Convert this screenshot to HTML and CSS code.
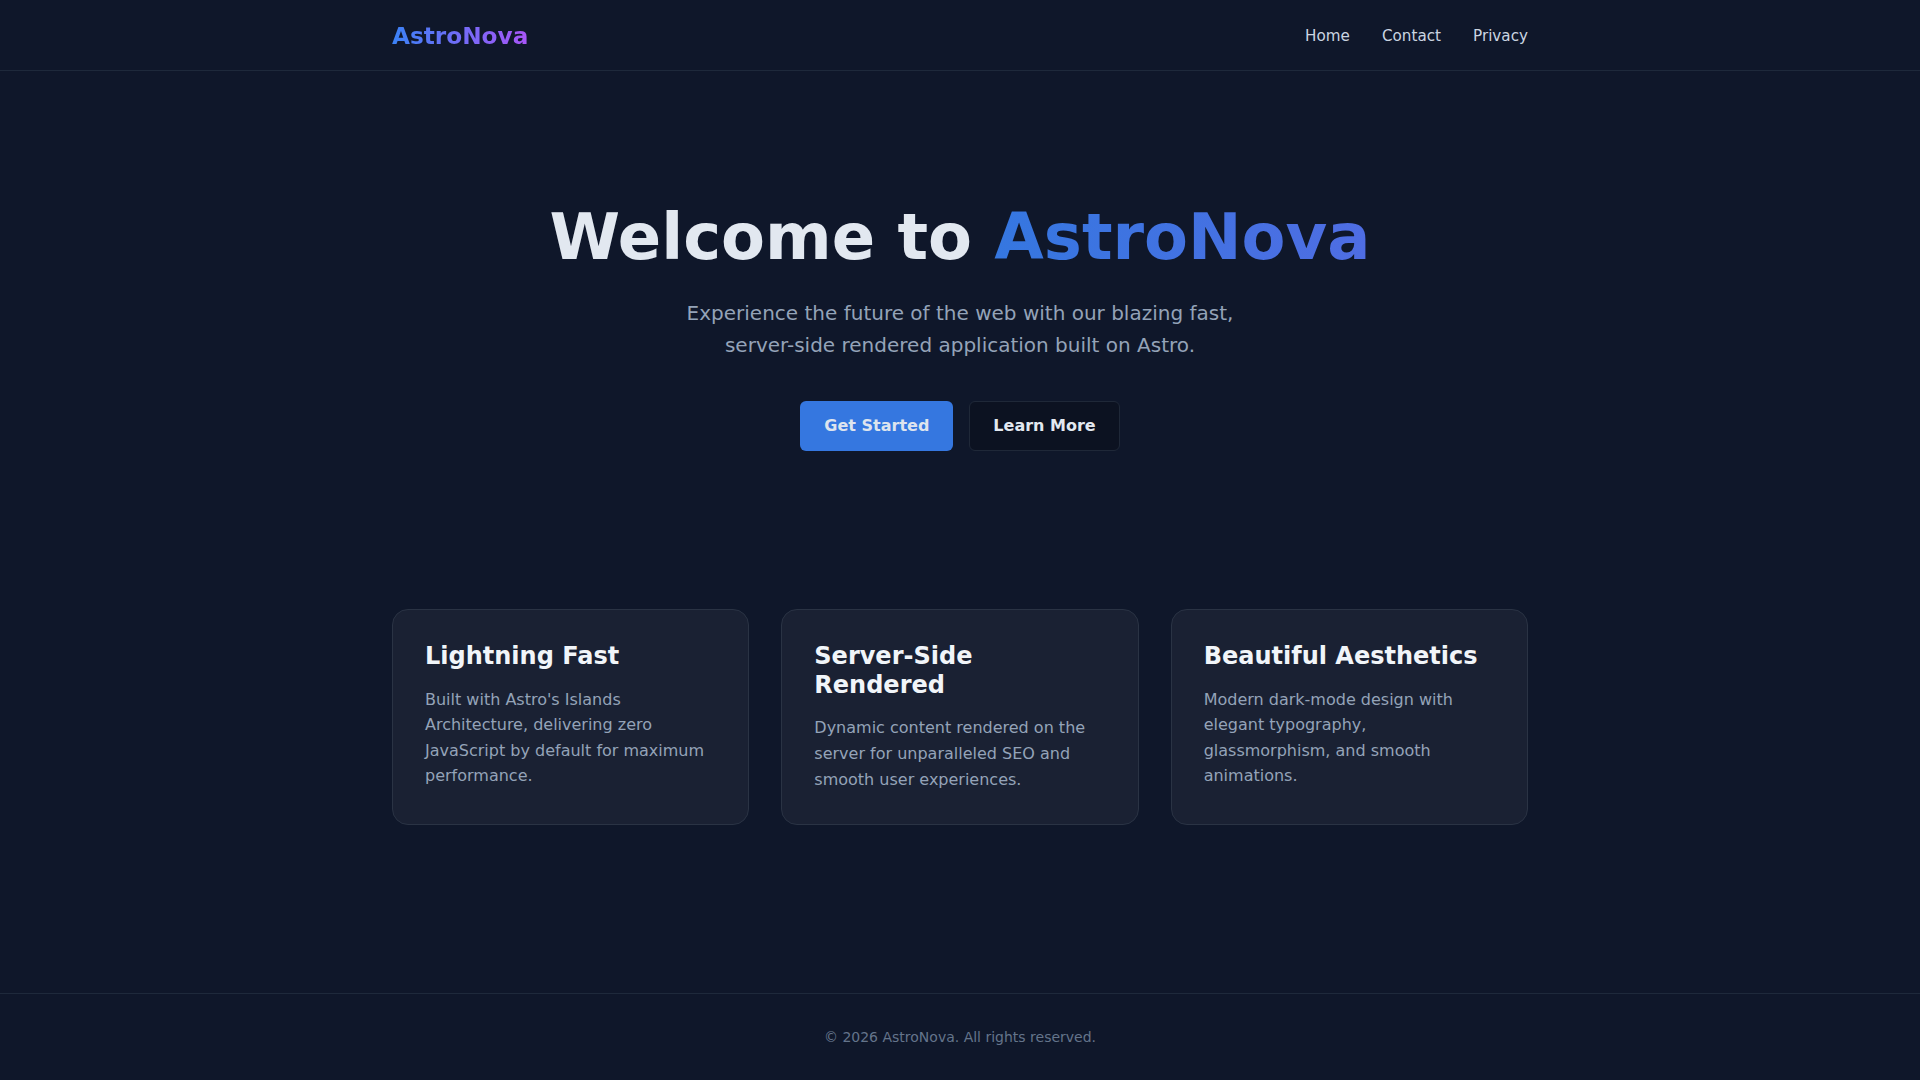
FILE: index.html
```html
<!DOCTYPE html>
<html lang="en">
<head>
    <meta charset="UTF-8">
    <meta name="viewport" content="width=device-width, initial-scale=1.0">
    <title>AstroNova</title>
    <link rel="stylesheet" href="styles.css">
</head>
<body>
    <header class="site-header">
        <div class="container header-inner">
            <a href="#" class="logo">AstroNova</a>
            <nav class="nav">
                <a href="#">Home</a>
                <a href="#">Contact</a>
                <a href="#">Privacy</a>
            </nav>
        </div>
    </header>

    <main class="main">
        <section class="hero">
            <h1>Welcome to <span class="accent">AstroNova</span></h1>
            <p class="lead">Experience the future of the web with our blazing fast,<br>server-side rendered application built on Astro.</p>
            <div class="actions">
                <a href="#" class="btn btn-primary">Get Started</a>
                <a href="#" class="btn btn-outline">Learn More</a>
            </div>
        </section>

        <section class="container features">
            <div class="card">
                <h3>Lightning Fast</h3>
                <p>Built with Astro's Islands Architecture, delivering zero JavaScript by default for maximum performance.</p>
            </div>
            <div class="card">
                <h3>Server-Side Rendered</h3>
                <p>Dynamic content rendered on the server for unparalleled SEO and smooth user experiences.</p>
            </div>
            <div class="card">
                <h3>Beautiful Aesthetics</h3>
                <p>Modern dark-mode design with elegant typography, glassmorphism, and smooth animations.</p>
            </div>
        </section>
    </main>

    <footer class="site-footer">
        <p>&copy; 2026 AstroNova. All rights reserved.</p>
    </footer>
</body>
</html>
```

FILE: styles.css
```css
* {
    box-sizing: border-box;
}
body {
    margin: 0;
    min-height: 100vh;
    display: flex;
    flex-direction: column;
    background-color: #0f172a;
    color: #e2e8f0;
    font-family: "DejaVu Sans", Verdana, sans-serif;
}
a {
    text-decoration: none;
    color: inherit;
}
.container {
    max-width: 1200px;
    margin: 0 auto;
    padding: 0 32px;
    width: 100%;
}
.site-header {
    border-bottom: 1px solid #1e293b;
    padding: 21px 0 20px;
}
.header-inner {
    display: flex;
    justify-content: space-between;
    align-items: center;
}
.logo {
    font-size: 23.2px;
    font-weight: bold;
    line-height: 29px;
    background: linear-gradient(to right, #3b82f6, #a855f7);
    -webkit-background-clip: text;
    background-clip: text;
    color: transparent;
}
.nav {
    display: flex;
    gap: 32px;
}
.nav a {
    font-size: 15.2px;
    color: #cbd5e1;
}
.main {
    flex: 1;
}
.hero {
    text-align: center;
    padding: 128px 0;
}
.hero h1 {
    font-size: 64px;
    line-height: 1.2;
    margin: 0 0 21px;
    color: #e2e8f0;
}
.accent {
    background: linear-gradient(to right, #3577e0, #4f6de3);
    -webkit-background-clip: text;
    background-clip: text;
    color: transparent;
}
.lead {
    font-size: 20px;
    line-height: 1.6;
    color: #94a3b8;
    margin: 0 0 40px;
}
.actions {
    display: flex;
    justify-content: center;
    gap: 16px;
}
.btn {
    display: inline-block;
    padding: 15px 23px;
    font-size: 16px;
    font-weight: bold;
    line-height: 18px;
    border-radius: 6px;
    border: 1px solid transparent;
    color: #e2e8f0;
}
.btn-primary {
    background-color: #3577e0;
    color: #dde4ee;
}
.btn-outline {
    background-color: #0c1221;
    border-color: #1f2838;
}
.features {
    display: grid;
    grid-template-columns: repeat(3, 1fr);
    gap: 32px;
    padding-top: 30px;
    padding-bottom: 64px;
}
.card {
    background-color: #1a2133;
    border: 1px solid #2a3344;
    border-radius: 16px;
    padding: 32px;
}
.card h3 {
    font-size: 24px;
    line-height: 1.2;
    margin: 0 0 16px;
    color: #f1f5f9;
}
.card p {
    margin: 0;
    font-size: 16px;
    line-height: 1.6;
    color: #94a3b8;
}
.site-footer {
    border-top: 1px solid #1e293b;
    text-align: center;
    padding: 32px 0;
}
.site-footer p {
    margin: 0;
    font-size: 14px;
    line-height: 22px;
    color: #64748b;
}
```
